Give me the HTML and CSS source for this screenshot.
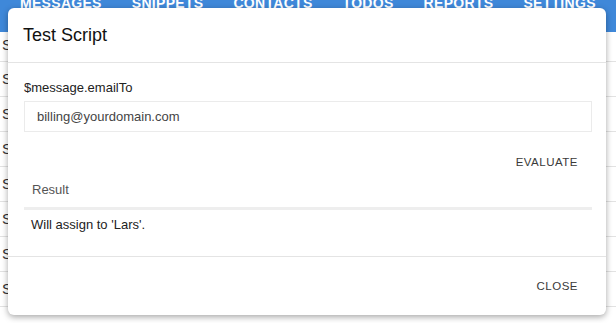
FILE: index.html
```html
<!DOCTYPE html>
<html>
    <head>
        <meta charset="utf-8">
        <link rel="stylesheet" href="styles.css">
    </head>
    <body>
        <div class="topnav">
            <span class="tab">MESSAGES</span>
            <span class="tab">SNIPPETS</span>
            <span class="tab">CONTACTS</span>
            <span class="tab">TODOS</span>
            <span class="tab">REPORTS</span>
            <span class="tab">SETTINGS</span>
        </div>
        <div class="list">
            <div class="row first">S</div>
            <div class="row">S</div>
            <div class="row">S</div>
            <div class="row">S</div>
            <div class="row">S</div>
            <div class="row">S</div>
            <div class="row">S</div>
            <div class="row">S</div>
        </div>

        <div class="modal">
            <div class="modal-head">Test Script</div>
            <div class="modal-body">
                <div class="field-label">$message.emailTo</div>
                <div class="field-input">billing@yourdomain.com</div>
                <div class="actions">
                    <span class="flat-btn">EVALUATE</span>
                </div>
                <div class="result-label">Result</div>
                <div class="result-text">Will assign to 'Lars'.</div>
            </div>
            <div class="modal-foot">
                <span class="flat-btn">CLOSE</span>
            </div>
        </div>
    </body>
</html>
```

FILE: styles.css
```css
html, body {
    margin: 0;
    padding: 0;
    height: 100%;
    overflow: hidden;
    background: #ffffff;
    font-family: "Liberation Sans", Arial, sans-serif;
}

.topnav {
    height: 32px;
    background: #3f88d9;
    display: flex;
    padding-left: 20px;
    gap: 30px;
    overflow: hidden;
}
.tab {
    color: #ffffff;
    font-size: 14px;
    font-weight: bold;
    letter-spacing: 0.3px;
    line-height: 14px;
    margin-top: -4px;
}

.row {
    height: 34px;
    line-height: 34px;
    border-bottom: 1px solid #e2e2e2;
    font-size: 15px;
    color: #333333;
    padding-left: 2px;
}
.row.first {
    height: 29px;
    line-height: 26px;
}

.modal {
    position: absolute;
    left: 8px;
    top: 8px;
    width: 598px;
    height: 307px;
    background: #ffffff;
    border-radius: 6px;
    box-shadow: 0 2px 6px rgba(0,0,0,0.35);
    display: flex;
    flex-direction: column;
    color: #222222;
}

.modal-head {
    height: 54px;
    border-bottom: 1px solid #e4e4e4;
    display: flex;
    align-items: center;
    padding-left: 15px;
    font-size: 18px;
    color: #111111;
}

.modal-body {
    padding: 17px 14px 21px 16px;
}
.field-label {
    font-size: 13px;
    line-height: 16px;
    color: #222222;
}
.field-input {
    margin-top: 5px;
    height: 29px;
    line-height: 29px;
    border: 1px solid #ebebeb;
    padding-left: 12px;
    font-size: 13px;
    color: #444444;
}
.actions {
    margin-top: 12px;
    height: 36px;
    display: flex;
    justify-content: flex-end;
}
.flat-btn {
    padding: 0 14px;
    line-height: 36px;
    font-size: 11.5px;
    letter-spacing: 0.5px;
    color: #3a3a3a;
}
.result-label {
    line-height: 20px;
    padding: 0 0 7px 8px;
    font-size: 13px;
    color: #555555;
}
.result-text {
    border-top: 3px solid #eeeeee;
    padding: 5px 0 0 7px;
    line-height: 20px;
    font-size: 13px;
    color: #222222;
}

.modal-foot {
    flex: 1;
    border-top: 1px solid #e4e4e4;
    display: flex;
    align-items: center;
    justify-content: flex-end;
    padding-right: 14px;
}
```
